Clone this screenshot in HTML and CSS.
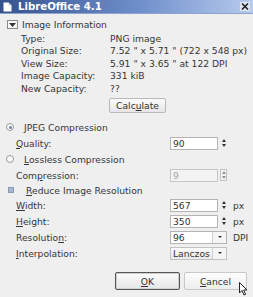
FILE: index.html
```html
<!DOCTYPE html>
<html lang="en">
<head>
  <meta charset="UTF-8">
  <title>LibreOffice 4.1</title>
  <link rel="stylesheet" href="styles.css">
</head>
<body>
  <div class="window">
    <div class="titlebar">
      <svg class="doc-icon" width="9" height="10" viewBox="0 0 9 10">
        <path d="M0.5 0.5 H5.5 L8.5 3.5 V9.5 H0.5 Z" fill="#fff"/>
        <path d="M5.5 0.5 V3.5 H8.5" fill="#c8d4ea"/>
      </svg>
      <span class="title">LibreOffice 4.1</span>
      <span class="close">
        <svg width="8" height="7" viewBox="0 0 8 7">
          <path d="M1 0.5 L7 6.5 M7 0.5 L1 6.5" stroke="#222" stroke-width="1.6"/>
        </svg>
      </span>
    </div>

    <div class="content">
      <div class="expander">
        <span class="exp-btn">
          <svg width="7" height="4" viewBox="0 0 7 4"><path d="M0 0 H7 L3.5 4 Z" fill="#333"/></svg>
        </span>
        <span>Image Information</span>
      </div>

      <div class="info">
        <span>Type:</span><span>PNG image</span>
        <span>Original Size:</span><span>7.52 " x 5.71 " (722 x 548 px)</span>
        <span>View Size:</span><span>5.91 " x 3.65 " at 122 DPI</span>
        <span>Image Capacity:</span><span>331 kiB</span>
        <span>New Capacity:</span><span>??</span>
      </div>

      <div class="calc-row">
        <button class="btn calc">Calc<u>u</u>late</button>
      </div>

      <div class="options">
        <div class="row">
          <span class="radio checked"></span>
          <span class="opt-text"><u>J</u>PEG Compression</span>
        </div>
        <div class="row">
          <span class="label"><u>Q</u>uality:</span>
          <span class="field">90</span>
          <span class="spin"><i class="up"></i><i class="down"></i></span>
        </div>
        <div class="row">
          <span class="radio"></span>
          <span class="opt-text"><u>L</u>ossless Compression</span>
        </div>
        <div class="row">
          <span class="label">Com<u>p</u>ression:</span>
          <span class="field disabled">9</span>
          <span class="spin boxed"><i class="up"></i><i class="down"></i></span>
        </div>
        <div class="row short">
          <span class="check"></span>
          <span class="opt-text"><u>R</u>educe Image Resolution</span>
        </div>
        <div class="row">
          <span class="label"><u>W</u>idth:</span>
          <span class="field">567</span>
          <span class="spin"><i class="up"></i><i class="down"></i></span>
          <span class="unit">px</span>
        </div>
        <div class="row">
          <span class="label"><u>H</u>eight:</span>
          <span class="field">350</span>
          <span class="spin"><i class="up"></i><i class="down"></i></span>
          <span class="unit">px</span>
        </div>
        <div class="row">
          <span class="label">Resolutio<u>n</u>:</span>
          <span class="combo">
            <span class="combo-text">96</span>
            <span class="combo-arrow"><i class="down"></i></span>
          </span>
          <span class="unit dpi">DPI</span>
        </div>
        <div class="row">
          <span class="label"><u>I</u>nterpolation:</span>
          <span class="combo list">
            <span class="combo-text">Lanczos</span>
            <span class="combo-arrow"><i class="down big"></i></span>
          </span>
        </div>
      </div>

      <div class="buttons">
        <button class="btn ok"><u>O</u>K</button>
        <button class="btn cancel"><u>C</u>ancel</button>
      </div>
    </div>

    <svg class="cursor" width="9" height="14" viewBox="0 0 9 14">
      <path d="M0.5 0.5 V11 L3 8.5 L5 13 L6.6 12.3 L4.7 8 H8 Z" fill="#fff" stroke="#222" stroke-width="1"/>
    </svg>
  </div>
</body>
</html>
```

FILE: styles.css
```css
html, body {
  margin: 0;
  padding: 0;
}
body {
  font-family: "DejaVu Sans", sans-serif;
  font-size: 9.2px;
  color: #363636;
  background: #efefef;
}
.window {
  position: relative;
  width: 253px;
  height: 297px;
  overflow: hidden;
  background: #efefef;
}
u {
  text-decoration-thickness: 1px;
  text-underline-offset: 1px;
}

/* title bar */
.titlebar {
  height: 14px;
  display: flex;
  align-items: center;
  background: linear-gradient(to right, #36528f, #6f8fcb 55%, #b7cbed);
  border-bottom: 1px solid #8ea4cc;
  box-sizing: border-box;
}
.doc-icon {
  margin-left: 3px;
}
.title {
  margin-left: 6px;
  color: #fff;
  font-weight: bold;
  font-size: 10.2px;
  line-height: 13px;
  flex: 1;
}
.close {
  width: 10px;
  height: 9px;
  margin-right: 3px;
  display: flex;
  align-items: center;
  justify-content: center;
  background: #dfe6f2;
}

/* image information */
.expander {
  display: flex;
  align-items: center;
  height: 13px;
  margin-top: 4px;
  padding-left: 7px;
}
.exp-btn {
  width: 11px;
  height: 9px;
  box-sizing: border-box;
  border: 1px solid #8a8a8a;
  background: #f7f7f7;
  display: flex;
  align-items: center;
  justify-content: center;
  margin-right: 4px;
}
.info {
  display: grid;
  grid-template-columns: 89px auto;
  grid-auto-rows: 12.5px;
  align-items: center;
  padding-left: 21px;
  margin-top: 1px;
}
.calc-row {
  padding-left: 109px;
  margin-top: 3.5px;
}

/* buttons */
.btn {
  font-family: "DejaVu Sans", sans-serif;
  font-size: 9.2px;
  color: #333;
  background: linear-gradient(#fbfbfb, #e6e6e6);
  border: 1px solid #b9b9b9;
  border-radius: 2px;
  padding: 0;
  margin: 0;
  box-sizing: border-box;
}
.calc {
  width: 57px;
  height: 15px;
}

/* compression options */
.options {
  margin-top: 6px;
}
.row {
  display: flex;
  align-items: center;
  height: 16px;
}
.row.short {
  height: 14px;
}
.label {
  width: 170px;
  padding-left: 16px;
  box-sizing: border-box;
}
.opt-text {
  margin-left: 10px;
}
.radio {
  width: 8px;
  height: 8px;
  margin-left: 6px;
  box-sizing: border-box;
  border: 1px solid #9a9a9a;
  border-radius: 50%;
  background: #fafafa;
  display: flex;
  align-items: center;
  justify-content: center;
}
.radio.checked::after {
  content: "";
  width: 3px;
  height: 3px;
  border-radius: 50%;
  background: #6c7fa8;
}
.check {
  width: 6px;
  height: 6px;
  margin-left: 8px;
  margin-right: 2px;
  box-sizing: border-box;
  border: 1px solid #8d9ab5;
  background: #aab6d0;
}
.field {
  width: 48px;
  height: 13px;
  box-sizing: border-box;
  border: 1px solid #b5b5b5;
  background: #fff;
  color: #333;
  padding-left: 2px;
  line-height: 11px;
}
.field.disabled {
  background: #f3f3f3;
  color: #a3a3a3;
  border-color: #c6c6c6;
}
.spin {
  width: 7px;
  height: 12px;
  margin-left: 2px;
  box-sizing: border-box;
  display: flex;
  flex-direction: column;
  align-items: center;
  justify-content: center;
  gap: 2px;
}
.spin.boxed {
  border: 1px solid #c2c2c2;
  background: #f4f4f4;
}
.spin.boxed i {
  opacity: 0.5;
}
.up {
  width: 0;
  height: 0;
  border-left: 2px solid transparent;
  border-right: 2px solid transparent;
  border-bottom: 3px solid #333;
}
.down {
  width: 0;
  height: 0;
  border-left: 2px solid transparent;
  border-right: 2px solid transparent;
  border-top: 3px solid #333;
}
.down.big {
  border-left-width: 3.5px;
  border-right-width: 3.5px;
  border-top-width: 3px;
}
.unit {
  margin-left: 6px;
}
.unit.dpi {
  margin-left: 6px;
}
.combo {
  width: 57px;
  height: 13px;
  box-sizing: border-box;
  border: 1px solid #b5b5b5;
  background: #fff;
  display: flex;
}
.combo.list {
  background: linear-gradient(#fbfbfb, #e9e9e9);
  border-color: #c2c2c2;
}
.combo-text {
  flex: 1;
  padding-left: 2px;
  line-height: 11px;
  color: #333;
}
.combo-arrow {
  width: 13px;
  border-left: 1px solid #cfcfcf;
  display: flex;
  align-items: center;
  justify-content: center;
  background: #f5f5f5;
}
.combo-arrow .down {
  border-left-width: 2.5px;
  border-right-width: 2.5px;
  border-top-width: 2.5px;
}

/* dialog buttons */
.buttons {
  display: flex;
  gap: 4px;
  padding-left: 115px;
  margin-top: 11px;
}
.ok {
  width: 65px;
  height: 18px;
  border: 1px solid #555;
  box-shadow: inset 0 0 0 1px #d0d0d0;
}
.cancel {
  width: 63px;
  height: 18px;
  background: linear-gradient(#fdfdfd, #eeeeee);
  border-color: #c8c8c8;
}
.cursor {
  position: absolute;
  left: 239px;
  top: 282px;
}
```
